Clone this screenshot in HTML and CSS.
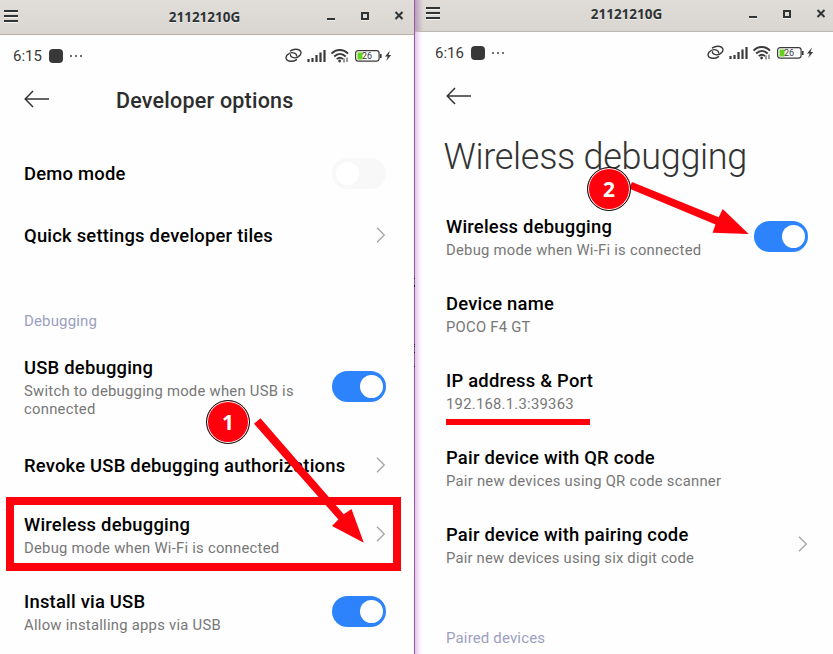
FILE: index.html
```
<!DOCTYPE html>
<html lang="en">
<head>
<meta charset="utf-8">
<title>21121210G</title>
<link rel="stylesheet" href="styles.css">
</head>
<body>
<svg class="defs" width="0" height="0" aria-hidden="true">
  <symbol id="menu" viewBox="0 0 14 13"><path d="M0 1h14M0 6h14M0 11h14" stroke="#2e3436" stroke-width="2"/><path d="M0 2.500h14M0 7.500h14M0 12.500h14" stroke="#f6f5f4"/></symbol>
  <symbol id="controls" viewBox="0 0 78 12"><path d="M0 9h8" stroke="#2e3436" stroke-width="2"/><path d="M0 10.500h8M34 10.500h8" stroke="#f1f0ee"/><path d="M35 3h6v6h-6z" fill="none" stroke="#2e3436" stroke-width="2"/><path d="M68.500 2l7 7M75.500 2l-7 7" stroke="#2e3436" stroke-width="2"/></symbol>
  <symbol id="back" viewBox="0 0 25 18"><path d="M1 9h24M9 1L1.200 9L9 17" fill="none" stroke="#333" stroke-width="1.500"/></symbol>
  <symbol id="chevron" viewBox="0 0 10 16"><path d="M1 .8L8.300 8L1 15.200" fill="none" stroke="#a0a0a0" stroke-width="1.200"/></symbol>
  <symbol id="status" viewBox="0 0 108 16">
    <g fill="none" stroke="#3a3a3a" stroke-width="1.400" stroke-linecap="round"><path d="M5.500 2.900C7.500 1.400 10.500.9 13 1.500C16 2.200 16.800 5 15 7.200C13 9.500 9.500 10.300 7 9.200C5.900 8.700 5.300 7.800 5.400 6.800"/><path d="M11.500 11.600C9.500 13.100 6.500 13.600 4 13C1 12.300.2 9.500 2 7.300C4 5 7.500 4.200 10 5.300C11.100 5.800 11.700 6.700 11.600 7.700"/></g>
    <path d="M23.500 14v-3M27.500 14v-4M31.500 14V7M35.500 14V4.500M39.500 14V2" stroke="#3a3a3a" stroke-width="2.200"/>
    <g fill="none" stroke="#3a3a3a" stroke-width="1.900"><path d="M46.500 5.700c4.500-5 12-5 16.500 0M49.200 8.500c3.500-3.500 8-3.500 11.500 0M51.800 11.200c2-2 4.200-2 6.200 0"/></g><circle cx="54.600" cy="13" r="1.400" fill="#3a3a3a"/><path d="M59 10.500v4M62 9.500v4.500" stroke="#3a3a3a" stroke-width="1"/>
    <rect x="70.600" y="2.600" width="23.500" height="10.500" rx="2.500" fill="none" stroke="#3a3a3a" stroke-width="1.200"/><path d="M72.500 4.500h5v7h-5z" fill="#63d31c"/><path d="M95.800 6v4" stroke="#3a3a3a" stroke-width="1.700"/>
    <path d="M105 2.500l-5 6h2.700l-1.500 4.500 5-6h-2.700z" fill="#3a3a3a"/>
  </symbol>
</svg>
<main class="desktop">
  <section class="window left">
    <header class="titlebar"><svg class="menu"><use href="#menu"/></svg><span>21121210G</span><svg class="controls"><use href="#controls"/></svg></header>
    <div class="statusbar"><span class="time">6:15</span><i class="app"></i><span class="dots"><i></i><i></i><i></i></span><div class="icons"><svg><use href="#status"/></svg><span class="charge">26</span></div></div>
    <div class="appbar"><svg class="back"><use href="#back"/></svg><h1>Developer options</h1></div>
    <div class="row short first"><div class="text"><h2>Demo mode</h2></div><i class="toggle off"></i></div>
    <div class="row short"><div class="text"><h2>Quick settings developer tiles</h2></div><svg class="chevron"><use href="#chevron"/></svg></div>
    <div class="label">Debugging</div>
    <div class="row tall"><div class="text"><h2>USB debugging</h2><p>Switch to debugging mode when USB is<br>connected</p></div><i class="toggle"></i></div>
    <div class="row short"><div class="text"><h2>Revoke USB debugging authorizations</h2></div><svg class="chevron"><use href="#chevron"/></svg></div>
    <div class="row marked"><div class="text"><h2>Wireless debugging</h2><p>Debug mode when Wi-Fi is connected</p></div><svg class="chevron"><use href="#chevron"/></svg></div>
    <div class="row"><div class="text"><h2>Install via USB</h2><p>Allow installing apps via USB</p></div><i class="toggle"></i></div>
  </section>
  <section class="window right">
    <header class="titlebar"><svg class="menu"><use href="#menu"/></svg><span>21121210G</span><svg class="controls"><use href="#controls"/></svg></header>
    <div class="statusbar"><span class="time">6:16</span><i class="app"></i><span class="dots"><i></i><i></i><i></i></span><div class="icons"><svg><use href="#status"/></svg><span class="charge">26</span></div></div>
    <div class="appbar"><svg class="back"><use href="#back"/></svg></div>
    <h1 class="large">Wireless debugging</h1>
    <div class="row"><div class="text"><h2>Wireless debugging</h2><p>Debug mode when Wi-Fi is connected</p></div><i class="toggle"></i></div>
    <div class="row"><div class="text"><h2>Device name</h2><p>POCO F4 GT</p></div></div>
    <div class="row underlined"><div class="text"><h2>IP address &amp; Port</h2><p>192.168.1.3:39363</p></div></div>
    <div class="row"><div class="text"><h2>Pair device with QR code</h2><p>Pair new devices using QR code scanner</p></div></div>
    <div class="row"><div class="text"><h2>Pair device with pairing code</h2><p class="narrow">Pair new devices using six digit code</p></div><svg class="chevron"><use href="#chevron"/></svg></div>
    <div class="label">Paired devices</div>
  </section>
  <svg class="arrows" viewBox="0 0 833 654"><path d="M414.500 278v1M414.500 285v2M414.500 344v1M414.500 346v1M414.500 352v1M414.500 366v1" stroke="#3b1446"/><g fill="#ff000d"><path d="M254 423.700L260.500 418.300L343.700 514.200L351.500 509L363.800 542.800L332 526L338.400 519.500z"/><path d="M632 182L718.700 217.300L722.700 209L748.700 234L712.600 232.700L715.500 224.500L629 188.500z"/></g></svg>
  <span class="badge one">1</span><span class="badge two">2</span>
</main>
</body>
</html>
```
FILE: styles.css
```
* { box-sizing: border-box; }
body { margin: 0; font-family: Roboto, sans-serif; background: #fff; }
h1, h2, p { margin: 0; }
svg, i { display: block; flex: none; }
.defs { position: absolute; }
.desktop { position: relative; display: flex; width: 833px; height: 654px; overflow: hidden; }
.window { background: #fefefe; overflow: hidden; }
.left { width: 414px; }
.right { width: 419px; border-left: 1px solid #9758a3; background: linear-gradient(90deg, #e2c5ea 0, #f0e0f4 3px, #fbf7fd 6px, #fefefe 8px); }

.titlebar { display: flex; align-items: center; height: 35px; padding: 0 9px 2px 4px; border-bottom: 1px solid #bdb0a8; background: linear-gradient(#e1deda, #d9d5d0); color: #2e3436; font: bold 13.500px "Noto Sans", sans-serif; text-shadow: 0 1px #eeecea; }
.titlebar span { flex: 1; text-align: center; padding: 2px 0 0 64px; }
.right .titlebar span { padding: 1px 0 0 64px; }
.titlebar .menu { width: 14px; height: 13px; }
.titlebar .controls { width: 78px; height: 12px; }
.right .titlebar { height: 32px; padding: 0 6px 4px 11px; border-bottom-color: #bcb7b2; background: linear-gradient(90deg, #b99bbd, #ddd9d500 8px), linear-gradient(#e0dcd8, #d9d5d0); }

.statusbar { display: flex; align-items: center; height: 42px; padding: 0 21px 0 13px; color: #3a3a3a; }
.time { width: 36px; font-size: 15px; }
.app { width: 14px; height: 14px; border-radius: 4px; background: #383838; }
.dots { display: flex; gap: 3px; margin-left: 7px; }
.dots i { width: 2px; height: 2px; border-radius: 50%; background: #444; }
.icons { position: relative; width: 108px; height: 16px; margin-left: auto; }
.icons svg { width: 108px; height: 16px; }
.charge { position: absolute; left: 77px; top: 3px; font-size: 9px; line-height: 10px; }
.right .statusbar { padding: 0 18px 0 20px; }

.appbar { display: flex; align-items: center; height: 44px; padding-left: 24px; color: #2d2d2d; }
.back { width: 25px; height: 18px; }
.appbar h1 { margin-left: 67px; padding-top: 3px; font-size: 21.500px; font-weight: 500; line-height: 26px; letter-spacing: .22px; }
.right .appbar { height: 43px; padding-left: 31px; }
.large { height: 81px; padding: 18px 0 0 28.500px; font-size: 36px; font-weight: 300; line-height: 44px; letter-spacing: -.3px; color: #333; white-space: nowrap; }

.row { display: flex; align-items: center; justify-content: space-between; height: 77px; padding: 0 28px 0 24px; white-space: nowrap; }
.first { margin-top: 21px; }
.short { height: 62px; }
.tall { height: 95px; }
.right .row { padding: 0 25px 0 31px; }
.text { padding-top: 2px; }
.row h2 { font-size: 18.400px; font-weight: 500; line-height: 24px; letter-spacing: .22px; color: #000; }
.row p { margin-bottom: 1px; padding-top: 2px; font-size: 14.800px; line-height: 18px; letter-spacing: .26px; color: #777; }
.row .narrow { letter-spacing: .2px; }
.label { height: 73px; padding: 45px 24px 0; font-size: 15px; line-height: 20px; letter-spacing: .15px; color: #9c9fc0; }
.right .label { padding-left: 31px; }
.chevron { width: 10px; height: 16px; }
.marked .chevron, .right .chevron { margin-bottom: 2px; }
.toggle { width: 54px; height: 31px; padding: 4px; border-radius: 16px; background: #2c83fb; }
.toggle::after { content: ""; display: block; width: 23px; height: 23px; margin-left: 24px; border-radius: 50%; background: #fff; }
.right .toggle { margin-bottom: 1px; }
.toggle.off { background: #f8f8f8; }
.toggle.off::after { margin-left: 0; }

.marked { position: relative; }
.marked::after { content: ""; position: absolute; inset: 1px 13px 2px 6px; border: 8px solid #ff000d; }
.underlined { position: relative; }
.underlined::after { content: ""; position: absolute; left: 31px; bottom: 4px; width: 144px; height: 6px; background: #ff000d; }
.arrows { position: absolute; inset: 0; width: 833px; height: 654px; }
.badge { position: absolute; width: 44px; height: 44px; border: 1.500px solid #111; border-radius: 50%; background: #ff000d; box-shadow: inset 0 0 0 1px #fff; color: #fff; font: bold 21px/42px "Noto Sans", sans-serif; text-align: center; }
.one { left: 206px; top: 400px; }
.two { left: 587px; top: 167px; }
```
